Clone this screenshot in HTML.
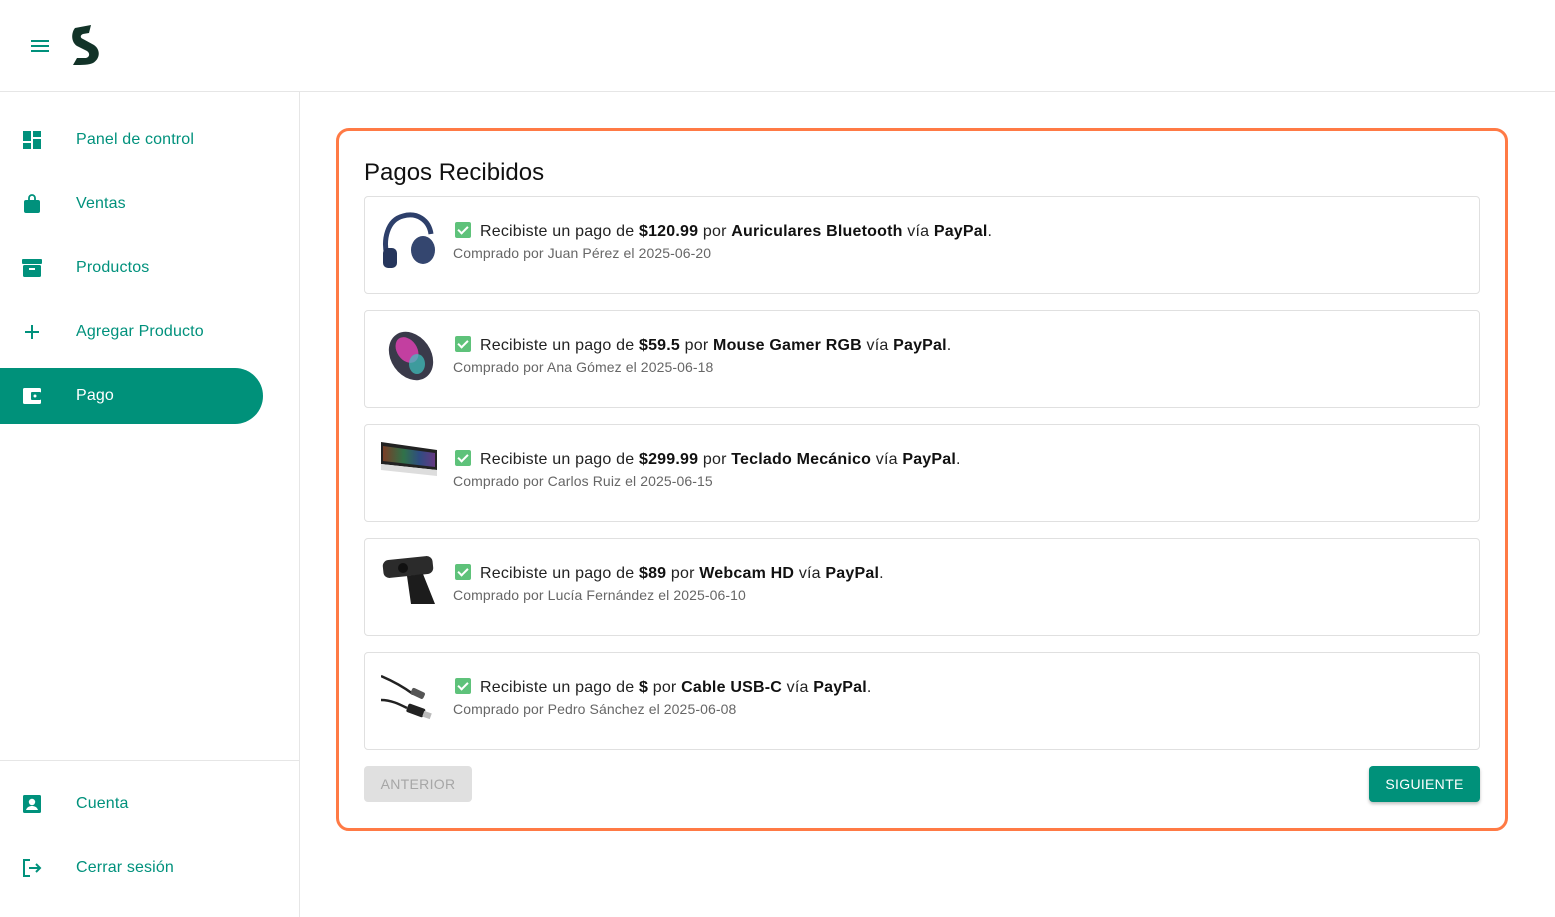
<!DOCTYPE html>
<html><head><meta charset="utf-8"><style>
*{box-sizing:border-box;margin:0;padding:0}
body{width:1555px;height:917px;overflow:hidden;background:#fff;font-family:"Liberation Sans",sans-serif;position:relative}
.hdr{position:absolute;left:0;top:0;width:1555px;height:92px;border-bottom:1px solid #e6e6e6}
.side{position:absolute;left:0;top:92px;width:300px;height:825px;border-right:1px solid #e6e6e6}
.nav{position:absolute;left:0;height:56px;width:263px;display:flex;align-items:center;color:#00917c;font-size:16px;letter-spacing:.15px}
.nav svg{position:absolute;left:22px;top:18px;width:20px;height:20px}
.nav span{position:absolute;left:76px;top:19px}
.nav.act{background:#00917a;color:#fff;border-radius:0 28px 28px 0}
.card{position:absolute;left:336px;top:128px;width:1172px;height:703px;border:3px solid #ff7a45;border-radius:13px}
h1{position:absolute;left:364px;top:159px;font-size:24px;font-weight:normal;color:#111}
.item{position:absolute;left:364px;width:1116px;height:98px;border:1px solid #e0e0e0;border-radius:4px}
.item .img{position:absolute;left:16px;top:15px;width:56px;height:56px}
.l1{position:absolute;left:90px;top:25px;font-size:16px;color:#222;white-space:nowrap;letter-spacing:.2px}
.l1 b{color:#111}
.ck{display:inline-block;width:16px;height:16px;background:#5ec27a;border-radius:2px;vertical-align:-2px;margin-right:9px;position:relative}
.ck:after{content:"";position:absolute;left:5px;top:2px;width:4px;height:8px;border:solid #fff;border-width:0 2px 2px 0;transform:rotate(45deg)}
.l2{position:absolute;left:88px;top:48px;font-size:14px;color:#666;white-space:nowrap;letter-spacing:.1px}
.btn{position:absolute;top:766px;height:36px;font-size:14px;display:flex;align-items:center;justify-content:center;border-radius:4px;letter-spacing:.3px}
</style></head><body>
<div class="hdr">
<svg style="position:absolute;left:30px;top:39px" width="20" height="14" viewBox="0 0 20 14"><rect x="1" y="1" width="18" height="2" fill="#00917c"/><rect x="1" y="6" width="18" height="2" fill="#00917c"/><rect x="1" y="11" width="18" height="2" fill="#00917c"/></svg>
<svg style="position:absolute;left:71px;top:25px" width="30" height="41" viewBox="0 0 30 41"><path d="M4 3 L20 0 L18 8 L12 9 C9 10 9 13 12 14 L23 20 C30 25 29 34 22 38 C18 40 12 40 2 40 L6 33 L15 33 C19 32 19 28 16 26 L6 21 C0 17 0 8 4 3 Z" fill="#123328"/></svg>
</div>
<div class="side">
<div class="nav" style="top:20px"><svg viewBox="0 0 20 20"><rect x="1" y="1" width="8" height="10" fill="#00917c"/><rect x="11" y="1" width="8" height="6" fill="#00917c"/><rect x="1" y="13" width="8" height="6" fill="#00917c"/><rect x="11" y="9" width="8" height="10" fill="#00917c"/></svg><span>Panel de control</span></div>
<div class="nav" style="top:84px"><svg viewBox="0 0 20 20"><path d="M7 6V4a3 3 0 0 1 6 0v2" stroke="#00917c" stroke-width="1.8" fill="none"/><rect x="2" y="6" width="16" height="13" rx="2" fill="#00917c"/></svg><span>Ventas</span></div>
<div class="nav" style="top:148px"><svg viewBox="0 0 20 20"><rect x="0" y="1" width="20" height="5" rx="1" fill="#00917c"/><rect x="1" y="7" width="18" height="12" rx="1.5" fill="#00917c"/><rect x="7" y="10" width="6" height="2" fill="#fff"/></svg><span>Productos</span></div>
<div class="nav" style="top:212px"><svg viewBox="0 0 20 20"><path d="M10 3v14M3 10h14" stroke="#00917c" stroke-width="2"/></svg><span>Agregar Producto</span></div>
<div class="nav act" style="top:276px"><svg viewBox="0 0 20 20"><rect x="1" y="2" width="18" height="16" rx="1.5" fill="#fff"/><rect x="9" y="6" width="10" height="8" rx="1" fill="#00917a"/><circle cx="13" cy="10" r="1.5" fill="#fff"/></svg><span>Pago</span></div>
<div style="position:absolute;left:0;top:668px;width:299px;border-top:1px solid #e6e6e6"></div>
<div class="nav" style="top:684px"><svg viewBox="0 0 20 20"><rect x="1" y="1" width="18" height="18" rx="1.5" fill="#00917c"/><circle cx="10" cy="8" r="3.2" fill="#fff"/><path d="M4 16c1-3 3.5-4 6-4s5 1 6 4z" fill="#fff"/></svg><span>Cuenta</span></div>
<div class="nav" style="top:748px"><svg viewBox="0 0 20 20"><path d="M8 2H2v16h6" stroke="#00917c" stroke-width="2" fill="none"/><path d="M7 10h11M14 6l4 4-4 4" stroke="#00917c" stroke-width="2" fill="none"/></svg><span>Cerrar sesión</span></div>
</div>
<div class="card"></div>
<h1>Pagos Recibidos</h1>

<div class="item" style="top:196px"><svg class="img" viewBox="0 0 56 56"><path d="M6 44C2 28 6 8 22 4c14-4 26 4 28 18" stroke="#2d3f6a" stroke-width="5" fill="none"/><ellipse cx="42" cy="38" rx="12" ry="14" fill="#34466f"/><rect x="2" y="36" width="14" height="20" rx="5" fill="#26365c"/></svg>
<div class="l1"><i class="ck"></i>Recibiste un pago de <b>$120.99</b> por <b>Auriculares Bluetooth</b> vía <b>PayPal</b>.</div><div class="l2">Comprado por Juan Pérez el 2025-06-20</div></div>

<div class="item" style="top:310px"><svg class="img" viewBox="0 0 56 56"><ellipse cx="30" cy="30" rx="20" ry="26" transform="rotate(-35 30 30)" fill="#3a3a4a"/><ellipse cx="26" cy="24" rx="10" ry="14" transform="rotate(-35 26 24)" fill="#c33fa0"/><ellipse cx="36" cy="38" rx="8" ry="10" fill="#3ec5c0" opacity=".7"/></svg>
<div class="l1"><i class="ck"></i>Recibiste un pago de <b>$59.5</b> por <b>Mouse Gamer RGB</b> vía <b>PayPal</b>.</div><div class="l2">Comprado por Ana Gómez el 2025-06-18</div></div>

<div class="item" style="top:424px"><svg class="img" viewBox="0 0 56 56"><defs><linearGradient id="g" x1="0" x2="1"><stop offset="0" stop-color="#c0542a"/><stop offset=".4" stop-color="#3bb36a"/><stop offset=".7" stop-color="#3a6fd0"/><stop offset="1" stop-color="#9b4ad0"/></linearGradient></defs><path d="M0 2l56 8v20L0 24z" fill="#222"/><path d="M2 6l52 7v14L2 21z" fill="url(#g)" opacity=".55"/><path d="M0 24l56 6v6L0 30z" fill="#ddd"/></svg>
<div class="l1"><i class="ck"></i>Recibiste un pago de <b>$299.99</b> por <b>Teclado Mecánico</b> vía <b>PayPal</b>.</div><div class="l2">Comprado por Carlos Ruiz el 2025-06-15</div></div>

<div class="item" style="top:538px"><svg class="img" viewBox="0 0 56 56"><rect x="2" y="4" width="50" height="18" rx="6" transform="rotate(-6 27 13)" fill="#2b2b2b"/><circle cx="22" cy="14" r="5" fill="#111"/><path d="M26 22l16-2 12 30H30z" fill="#1c1c1c"/></svg>
<div class="l1"><i class="ck"></i>Recibiste un pago de <b>$89</b> por <b>Webcam HD</b> vía <b>PayPal</b>.</div><div class="l2">Comprado por Lucía Fernández el 2025-06-10</div></div>

<div class="item" style="top:652px"><svg class="img" viewBox="0 0 56 56"><path d="M0 8c14 6 24 12 32 18M0 32c10 0 18 4 26 8" stroke="#222" stroke-width="2.5" fill="none"/><rect x="30" y="22" width="14" height="7" rx="2" transform="rotate(25 37 25)" fill="#555"/><rect x="26" y="38" width="18" height="9" rx="2" transform="rotate(20 35 42)" fill="#222"/><rect x="42" y="44" width="8" height="6" transform="rotate(20 46 47)" fill="#bbb"/></svg>
<div class="l1"><i class="ck"></i>Recibiste un pago de <b>$</b> por <b>Cable USB-C</b> vía <b>PayPal</b>.</div><div class="l2">Comprado por Pedro Sánchez el 2025-06-08</div></div>

<div class="btn" style="left:364px;width:108px;background:#e0e0e0;color:#a6a6a6">ANTERIOR</div>
<div class="btn" style="left:1369px;width:111px;background:#00917a;color:#fff;box-shadow:0 2px 3px rgba(0,0,0,.25)">SIGUIENTE</div>
</body></html>
